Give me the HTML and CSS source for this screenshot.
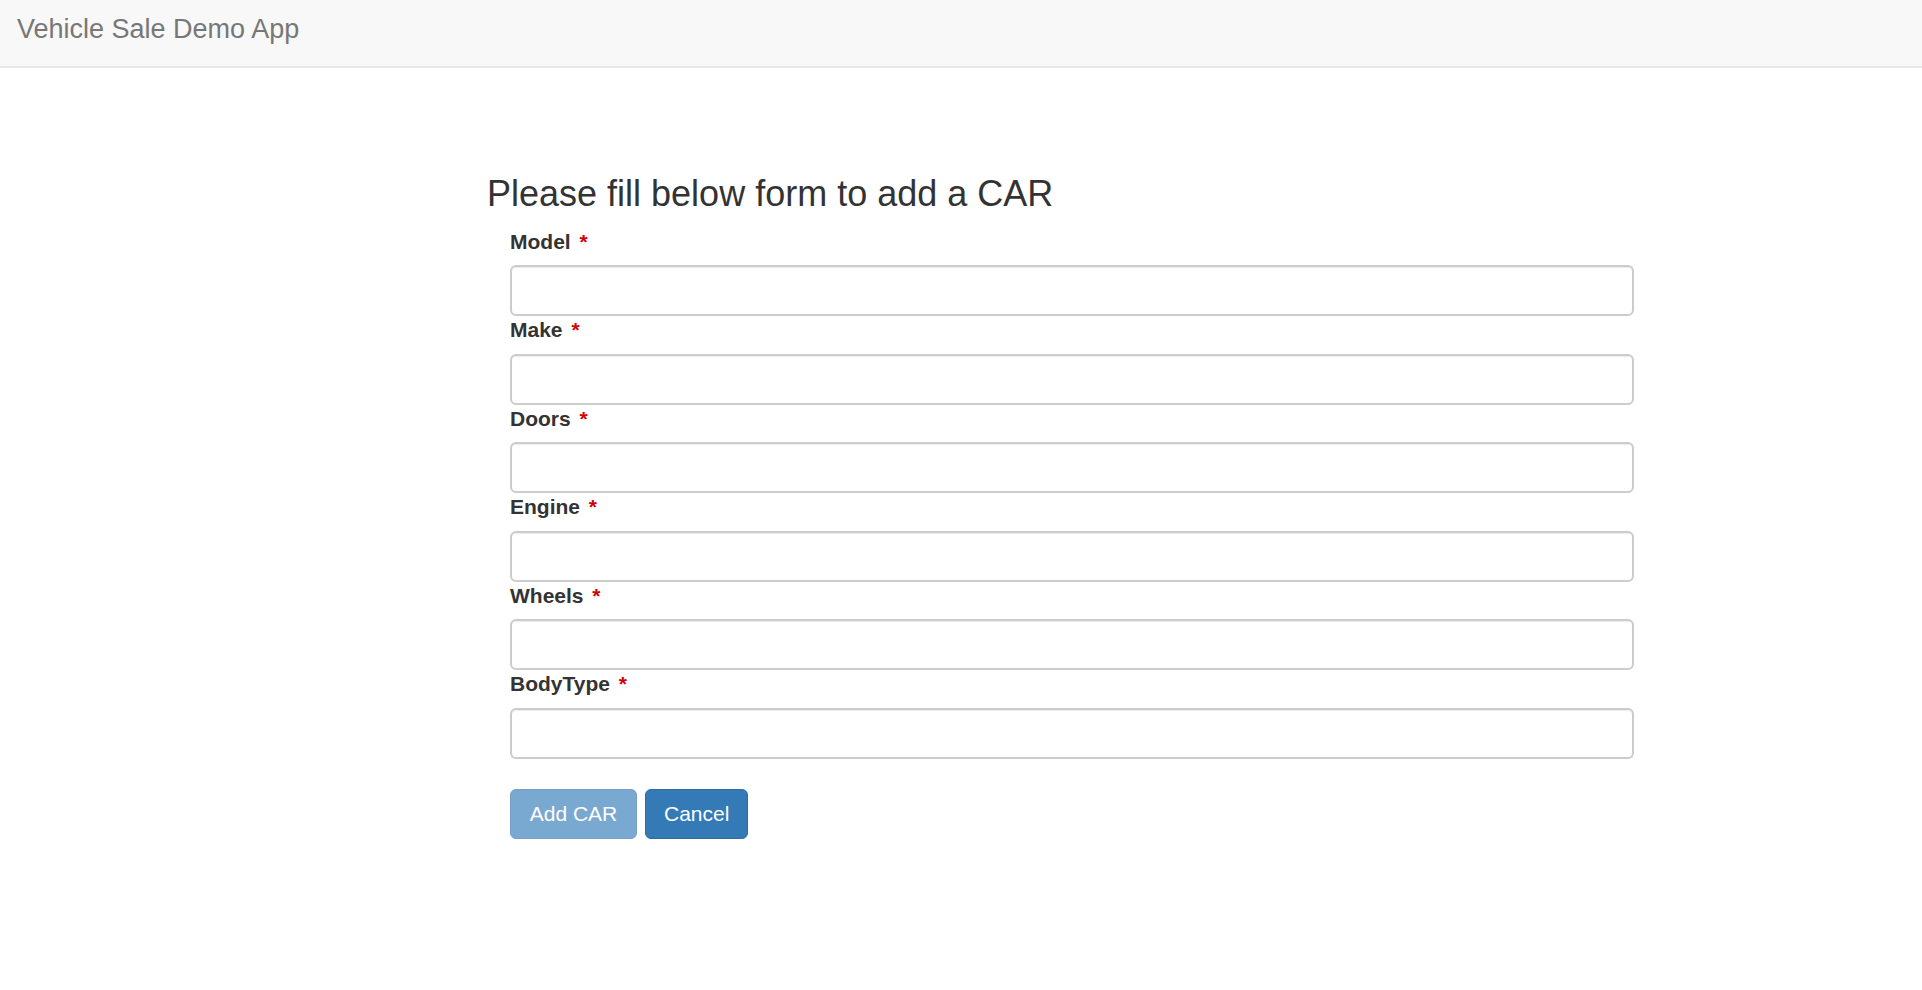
FILE: index.html
```html
<!DOCTYPE html>
<html>
<head>
<meta charset="utf-8">
<title>Vehicle Sale Demo App</title>
<link rel="stylesheet" href="styles.css">
</head>
<body>
<nav class="navbar">
  <a class="brand" href="#">Vehicle Sale Demo App</a>
</nav>
<main class="main">
  <h3 class="title">Please fill below form to add a CAR</h3>
  <form class="car-form">
    <label class="field-label">Model <span class="req">*</span></label>
    <input class="field-input" type="text">
    <label class="field-label">Make <span class="req">*</span></label>
    <input class="field-input" type="text">
    <label class="field-label">Doors <span class="req">*</span></label>
    <input class="field-input" type="text">
    <label class="field-label">Engine <span class="req">*</span></label>
    <input class="field-input" type="text">
    <label class="field-label">Wheels <span class="req">*</span></label>
    <input class="field-input" type="text">
    <label class="field-label">BodyType <span class="req">*</span></label>
    <input class="field-input" type="text">
    <div class="actions">
      <button class="btn btn-disabled" type="button">Add CAR</button>
      <button class="btn btn-primary" type="button">Cancel</button>
    </div>
  </form>
</main>
</body>
</html>
```

FILE: styles.css
```css
* { box-sizing: border-box; }
html, body { margin: 0; padding: 0; background: #fff; }
body {
  font-family: "Liberation Sans", Arial, sans-serif;
  color: #333;
}
.navbar {
  height: 68px;
  background: #f8f8f8;
  border-bottom: 2px solid #e7e7e7;
  padding: 14px 0 0 17px;
}
.brand {
  display: block;
  font-size: 27px;
  line-height: 30px;
  color: #777;
  text-decoration: none;
}
.main {
  padding: 106px 0 0 487px;
  width: 1634px;
}
.title {
  margin: 0 0 14px 0;
  font-size: 36px;
  line-height: 39.6px;
  font-weight: 500;
  color: #333;
}
.car-form {
  padding-left: 23px;
}
.field-label {
  display: block;
  font-size: 21px;
  line-height: 28px;
  font-weight: bold;
  color: #333;
  margin-bottom: 9.5px;
}
.req {
  color: #d40000;
  margin-left: 3px;
}
.field-input {
  display: block;
  width: 100%;
  height: 51px;
  border: 2px solid #ccc;
  border-radius: 6px;
  background: #fff;
  box-shadow: inset 0 1px 1px rgba(0,0,0,0.075);
  font-size: 21px;
  padding: 9px 18px;
  font-family: inherit;
}
.actions {
  display: flex;
  gap: 8px;
  margin-top: 30.5px;
}
.btn {
  font-family: inherit;
  font-size: 21px;
  line-height: 30px;
  height: 50px;
  padding: 9px 18px;
  border-radius: 6px;
  color: #fff;
  border: 1.5px solid #2e6da4;
  background: #337ab7;
}
.btn-disabled {
  opacity: 0.65;
  width: 127px;
}
.btn-primary {
  width: 103px;
}
```
